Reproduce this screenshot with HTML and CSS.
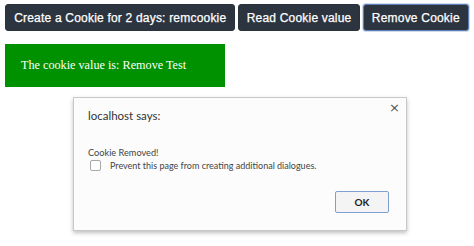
FILE: index.html
```html
<!DOCTYPE html>
<html lang="en">
<head>
    <meta charset="UTF-8">
    <title>Cookie example</title>
    <link rel="stylesheet" href="styles.css">
</head>
<body>
<div class="btn-row">
    <button class="btn btn-create">Create a Cookie for 2 days: remcookie</button>
    <button class="btn btn-read">Read Cookie value</button>
    <button class="btn btn-remove btn-focus">Remove Cookie</button>
</div>
<div class="result">The cookie value is: Remove Test</div>
<div class="dialog">
    <div class="dialog-header">
        <span class="dialog-title">localhost says:</span>
        <span class="dialog-close">&times;</span>
    </div>
    <div class="dialog-msg">Cookie Removed!</div>
    <label class="dialog-check"><span class="check-box"></span>Prevent this page from creating additional dialogues.</label>
    <div class="dialog-footer">
        <button class="ok-btn">OK</button>
    </div>
</div>
</body>
</html>
```

FILE: styles.css
```css
* {
    margin: 0;
    padding: 0;
    box-sizing: border-box;
}

body {
    width: 474px;
    height: 246px;
    padding: 4px 5px;
    background: #fff;
    font-family: "Liberation Sans", Arial, sans-serif;
    overflow: hidden;
}

.btn-row {
    display: flex;
    gap: 3px;
}

.btn {
    height: 27px;
    padding: 0;
    border: 1px solid #2a323b;
    border-radius: 3px;
    background: #2c353f;
    color: #fff;
    font-family: "Liberation Sans", Arial, sans-serif;
    font-size: 12px;
    letter-spacing: 0.2px;
    -webkit-text-stroke: 0.25px #fff;
    white-space: nowrap;
    text-align: center;
}

.btn-create {
    width: 232px;
}

.btn-read {
    width: 122px;
}

.btn-remove {
    width: 107px;
}

.btn-focus {
    border-color: #5b7fb6;
    box-shadow: 0 0 0 1px rgba(120, 150, 200, .35);
}

.result {
    width: 220px;
    height: 43px;
    margin-top: 13px;
    padding-left: 16px;
    background: #009100;
    color: #fff;
    font-family: "Liberation Serif", "Times New Roman", serif;
    font-size: 12.2px;
    line-height: 43px;
}

.dialog {
    width: 334px;
    height: 134px;
    margin: 10px 0 0 68px;
    border: 1px solid #c8c8c8;
    background: #fcfcfc;
    box-shadow: 0 2px 4px rgba(0, 0, 0, .25);
    font-family: Lato, "Noto Sans", sans-serif;
    color: #333;
    padding: 0 14px;
}

.dialog-header {
    display: flex;
    justify-content: space-between;
    align-items: flex-start;
    padding-top: 9px;
    height: 49px;
}

.dialog-title {
    font-size: 11.5px;
    line-height: 18px;
    color: #333;
}

.dialog-close {
    font-size: 13px;
    line-height: 1;
    color: #555;
    margin-right: -8px;
    margin-top: -6px;
    font-family: "DejaVu Sans", sans-serif;
}

.dialog-msg {
    font-size: 9.2px;
    color: #444;
    height: 13px;
}

.dialog-check {
    display: flex;
    align-items: center;
    gap: 9px;
    font-size: 9px;
    color: #444;
    padding-left: 2px;
}

.check-box {
    width: 11px;
    height: 11px;
    border: 1px solid #a8a8a8;
    border-radius: 2px;
    background: #fff;
}

.dialog-footer {
    display: flex;
    justify-content: flex-end;
    padding-top: 20px;
    padding-right: 3px;
}

.ok-btn {
    width: 54px;
    height: 22px;
    border: 1px solid #7f9fd3;
    background: #f4f4f4;
    border-radius: 2px;
    font-family: Lato, "Noto Sans", sans-serif;
    font-size: 10px;
    font-weight: bold;
    color: #222;
}
```
